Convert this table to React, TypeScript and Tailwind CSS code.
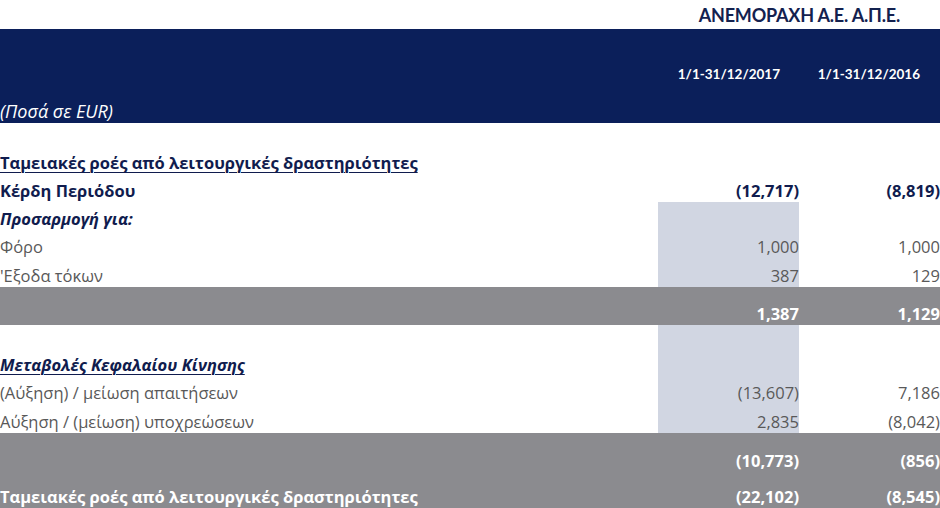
import React from 'react'

type Row = {
  label?: string
  a?: string
  b?: string
  kind?: 'head' | 'bold' | 'sub' | 'plain' | 'total'
  h: string
  blue?: boolean
  pad?: string
}

const top: Row[] = [
  { label: 'Ταμειακές ροές από λειτουργικές δραστηριότητες', kind: 'head', h: 'h-[28px]' },
  { label: 'Κέρδη Περιόδου', a: '(12,717)', b: '(8,819)', kind: 'bold', h: 'h-[25px]', pad: 'pt-[2px]' },
  { label: 'Προσαρμογή για:', kind: 'sub', h: 'h-[31px]', blue: true, pad: 'pt-[3px]' },
  { label: 'Φόρο', a: '1,000', b: '1,000', kind: 'plain', h: 'h-[28px]', blue: true },
  { label: "'Εξοδα τόκων", a: '387', b: '129', kind: 'plain', h: 'h-[26px]', blue: true, pad: 'pt-[3px]' },
]

const middle: Row[] = [
  { h: 'h-[26px]', blue: true },
  { label: 'Μεταβολές Κεφαλαίου Κίνησης', kind: 'sub', h: 'h-[28px]', blue: true },
  { label: '(Αύξηση) / μείωση απαιτήσεων', a: '(13,607)', b: '7,186', kind: 'plain', h: 'h-[28px]', blue: true },
  {
    label: 'Αύξηση / (μείωση) υποχρεώσεων',
    a: '2,835',
    b: '(8,042)',
    kind: 'plain',
    h: 'h-[26px]',
    blue: true,
    pad: 'pt-[3px]',
  },
]

function textClass(kind?: Row['kind']) {
  switch (kind) {
    case 'head':
      return 'font-bold text-[#101c4e] underline underline-offset-[3px] decoration-1'
    case 'bold':
      return 'font-bold text-[#101c4e]'
    case 'sub':
      return 'font-bold italic text-[#101c4e] underline underline-offset-[3px] decoration-1'
    case 'total':
      return 'font-bold text-white'
    default:
      return 'text-[#595959]'
  }
}

function TableRow({ row }: { row: Row }) {
  const tc = textClass(row.kind)
  const isSub = row.kind === 'sub' && row.label === 'Προσαρμογή για:'
  return (
    <div className={`flex ${row.h}`}>
      <div className={`flex-1 flex items-center whitespace-nowrap ${row.pad ?? ''}`}>
        <span className={isSub ? 'font-bold italic text-[#101c4e]' : tc}>{row.label}</span>
      </div>
      <div
        className={`w-[141px] flex items-center justify-end ${row.blue ? 'bg-[#d1d6e2]' : ''} ${row.pad ?? ''}`}
      >
        <span className={tc}>{row.a}</span>
      </div>
      <div className={`w-[141px] flex items-center justify-end ${row.pad ?? ''}`}>
        <span className={tc}>{row.b}</span>
      </div>
    </div>
  )
}

export default function App() {
  return (
    <div className="w-[940px] h-[508px] overflow-hidden bg-white text-[16.5px] leading-[22px] font-['Open_Sans',sans-serif]">
      {/* company name */}
      <div className="h-[29px] flex items-center justify-end pr-[40px]">
        <span className="font-['Lato',sans-serif] font-bold text-[18px] text-[#13214f] tracking-[-0.2px]">
          ΑΝΕΜΟΡΑΧΗ Α.Ε. Α.Π.Ε.
        </span>
      </div>

      {/* navy header */}
      <div className="h-[94px] bg-[#0b1f5a] flex flex-col justify-end">
        <div className="flex h-[22px]">
          <div className="flex-1" />
          <div className="w-[141px] flex items-center justify-end pr-[19px]">
            <span className="font-['Lato',sans-serif] font-bold text-[13.5px] text-white">1/1-31/12/2017</span>
          </div>
          <div className="w-[141px] flex items-center justify-end pr-[20px]">
            <span className="font-['Lato',sans-serif] font-bold text-[13.5px] text-white">1/1-31/12/2016</span>
          </div>
        </div>
        <div className="h-[14px]" />
        <div className="h-[24px] flex items-center">
          <span className="italic text-white text-[18px]">(Ποσά σε EUR)</span>
        </div>
      </div>

      <div className="h-[26px]" />
      {top.map((r, i) => (
        <TableRow key={i} row={r} />
      ))}

      {/* subtotal */}
      <div className="h-[38px] bg-[#8b8b8f] flex items-end">
        <div className="flex-1" />
        <div className="w-[141px] text-right font-bold text-white">1,387</div>
        <div className="w-[141px] text-right font-bold text-white">1,129</div>
      </div>

      {middle.map((r, i) => (
        <TableRow key={i} row={r} />
      ))}

      {/* totals */}
      <div className="bg-[#8b8b8f] pt-[14px] pb-[10px]">
        <div className="flex h-[28px] items-center">
          <div className="flex-1" />
          <div className="w-[141px] text-right font-bold text-white">(10,773)</div>
          <div className="w-[141px] text-right font-bold text-white">(856)</div>
        </div>
        <div className="h-[8px]" />
        <div className="flex h-[28px] items-center">
          <div className="flex-1 whitespace-nowrap font-bold text-white">
            Ταμειακές ροές από λειτουργικές δραστηριότητες
          </div>
          <div className="w-[141px] text-right font-bold text-white">(22,102)</div>
          <div className="w-[141px] text-right font-bold text-white">(8,545)</div>
        </div>
      </div>
    </div>
  )
}
